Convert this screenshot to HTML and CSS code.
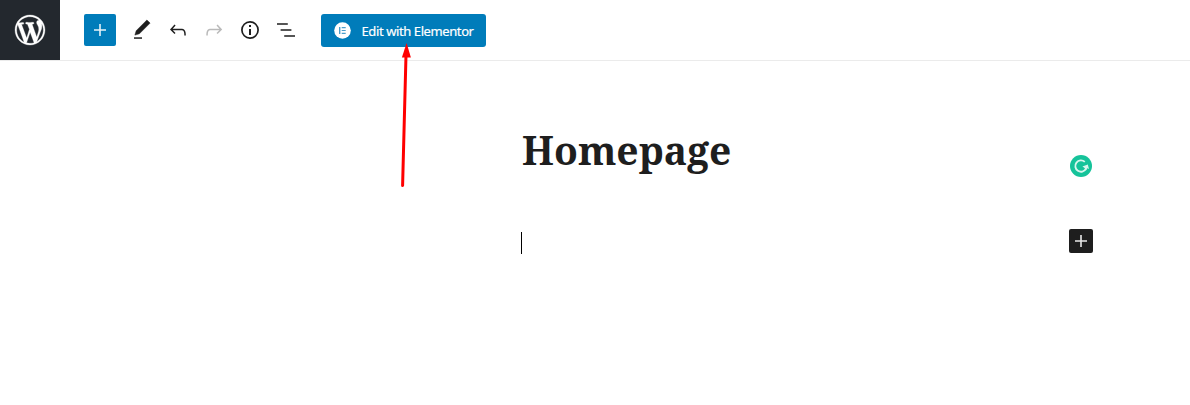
FILE: index.html
```html
<!DOCTYPE html>
<html lang="en">
<head>
<meta charset="utf-8">
<title>Homepage</title>
<link rel="stylesheet" href="styles.css">
</head>
<body>
<header class="header">
  <a class="site-logo" aria-label="WordPress"><svg width="36" height="36" viewBox="-2 -2 24 24"><path d="M20 10c0-5.51-4.49-10-10-10C4.48 0 0 4.49 0 10c0 5.52 4.48 10 10 10 5.51 0 10-4.48 10-10zM7.78 15.37L4.37 6.22c.55-.02 1.17-.08 1.17-.08.5-.06.44-1.13-.06-1.11 0 0-1.45.11-2.37.11-.18 0-.37 0-.58-.01C4.12 2.69 6.87 1.11 10 1.11c2.33 0 4.45.87 6.05 2.34-.68-.11-1.65.39-1.65 1.58 0 .74.45 1.36.9 2.1.35.61.55 1.36.55 2.46 0 1.49-1.4 5-1.4 5l-3.03-8.37c.54-.02.82-.17.82-.17.5-.05.44-1.25-.06-1.22 0 0-1.44.12-2.38.12-.87 0-2.33-.12-2.33-.12-.5-.03-.56 1.2-.06 1.22l.92.08 1.26 3.41zM17.41 10c.24-.64.74-1.87.43-4.25.7 1.29 1.05 2.71 1.05 4.25 0 3.29-1.73 6.24-4.4 7.78.97-2.59 1.94-5.2 2.92-7.78zM6.1 18.09C3.12 16.65 1.11 13.53 1.11 10c0-1.3.23-2.48.72-3.59C3.25 10.3 4.67 14.2 6.1 18.09zm4.03-6.63l2.58 6.98c-.86.29-1.76.45-2.71.45-.79 0-1.57-.11-2.29-.33.81-2.38 1.62-4.74 2.42-7.1z"/></svg></a>
  <button class="add" aria-label="Add block"><svg width="24" height="24" viewBox="0 0 24 24"><path d="M18 11.2h-5.2V6h-1.6v5.2H6v1.6h5.2V18h1.6v-5.2H18z"/></svg></button>
  <div class="tools">
    <svg width="24" height="24" viewBox="0 0 24 24"><path class="pencil" d="M20.1 5.1L16.9 2 6.2 12.7l-1.3 4.4 4.5-1.3L20.1 5.1z"/><path d="M4 20.8h8v-1.5H4v1.5z"/></svg>
    <svg width="24" height="24" viewBox="0 0 24 24"><path d="M18.3 11.7c-.6-.6-1.4-.9-2.3-.9H6.7l2.9-3.3-1.1-1-4.5 5L8.5 16l1-1-2.7-2.7H16c.5 0 .9.2 1.3.5 1 1 1 3.4 1 4.5v.3h1.5v-.2c0-1.5 0-4.3-1.5-5.7z"/></svg>
    <svg class="disabled" width="24" height="24" viewBox="0 0 24 24"><path d="M15.6 6.5l-1.1 1 2.9 3.3H8c-.9 0-1.7.3-2.3.9-1.4 1.5-1.4 4.2-1.4 5.6v.2h1.5v-.3c0-1.1 0-3.5 1-4.5.3-.3.7-.5 1.3-.5h9.2L14.5 15l1.1 1.1 4.6-4.6-4.6-5z"/></svg>
    <svg width="24" height="24" viewBox="0 0 24 24"><circle class="ring" cx="12" cy="12" r="8.1"/><path d="M11 7h2v2h-2zM11 11h2v6h-2z"/></svg>
    <svg width="24" height="24" viewBox="0 0 24 24"><path d="M13.8 5.2H3v1.5h10.8V5.2zm-3.6 12v1.5H21v-1.5H10.2zm7.2-6H6.6v1.5h10.8v-1.5z"/></svg>
  </div>
  <button class="elementor"><svg width="17" height="17" viewBox="0 0 17 17"><circle class="disc" cx="8.5" cy="8.5" r="8.3"/><path class="mark" d="M5 5h1.4v7H5zM7.7 5h4v1.2h-4zM7.7 7.9h4v1.2h-4zM7.7 10.8h4v1.2h-4z"/></svg><span>Edit with Elementor</span></button>
  <svg class="arrow" width="20" height="150" viewBox="398 40 20 150"><path class="shaft" d="M402.6 185.5L406 55"/><path class="head" d="M406.6 43L410.9 57.4H401.9z"/></svg>
</header>
<main class="editor">
  <div class="row title-row">
    <h1 class="title">Homepage</h1>
    <svg class="assistant" width="24" height="24" viewBox="0 0 24 24"><circle class="badge" cx="12" cy="12" r="11"/><path class="g" d="M15.8 7.8A5.7 5.7 0 1 0 17 14.8"/><path class="tip" d="M13.4 12.6L18.8 10.6 20 15 18.2 14.2 17 16.4 15.6 14z"/></svg>
  </div>
  <div class="row block-row">
    <span class="caret"></span>
    <button class="inserter" aria-label="Add block"><svg width="24" height="24" viewBox="0 0 24 24"><path d="M18 11.2h-5.2V6h-1.6v5.2H6v1.6h5.2V18h1.6v-5.2H18z"/></svg></button>
  </div>
</main>
</body>
</html>
```
FILE: styles.css
```css
* { box-sizing: border-box; }
body { margin: 0; height: 405px; background: #fff; color: #1e1e1e; overflow: hidden; }
svg { display: block; flex: none; fill: currentColor; }
button { border: 0; padding: 0; display: flex; align-items: center; color: #fff; }
.header { position: relative; display: flex; align-items: center; height: 61px; border-bottom: 1px solid #ebebeb; }
.site-logo { display: flex; align-items: center; justify-content: center; width: 60px; height: 60px; background: #23282e; color: #fff; }
.site-logo path { stroke: #fff; stroke-width: 0.2; }
.add { width: 32px; height: 32px; margin-left: 24px; justify-content: center; background: #007cba; border-radius: 2px; }
.add svg, .inserter svg { opacity: 0.9; }
.tools { display: flex; gap: 12px; margin-left: 14px; }
.disabled { color: #bababa; }
.pencil { stroke: #1e1e1e; stroke-width: 0.5; stroke-linejoin: round; }
.ring { fill: none; stroke: #1e1e1e; stroke-width: 1.7; }
.elementor { width: 165px; height: 33px; margin: 1px 0 0 23px; padding-left: 12.5px; gap: 11px; background: #007cba; border-radius: 3px; font: 13px/20px "Noto Sans", "Open Sans", sans-serif; white-space: nowrap; }
.elementor span { padding-top: 1px; letter-spacing: -0.4px; -webkit-text-stroke: 0.2px currentColor; }
.elementor svg { margin-top: -1px; }
.disc { fill: #fff; }
.mark { fill: #4b9ecb; }
.arrow { position: absolute; left: 398px; top: 40px; }
.shaft { fill: none; stroke: #f00; stroke-width: 3; stroke-linecap: round; }
.head { fill: #f00; }
.editor { width: 572px; margin-left: 521px; }
.row { display: flex; justify-content: space-between; }
.title-row { padding-top: 61px; height: 168px; }
.title { margin: 0; padding-left: 1px; font: bold 39px/55px "Noto Serif", "DejaVu Serif Condensed", "DejaVu Serif", serif; }
.assistant { margin-top: 32px; }
.badge { fill: #15c39a; }
.g { fill: none; stroke: #d8f6ee; stroke-width: 1.8; }
.tip { fill: #d8f6ee; }
.caret { width: 1px; height: 22px; margin-top: 3px; background: #000; }
.inserter { width: 24px; height: 24px; background: #1e1e1e; border-radius: 2px; }
```
